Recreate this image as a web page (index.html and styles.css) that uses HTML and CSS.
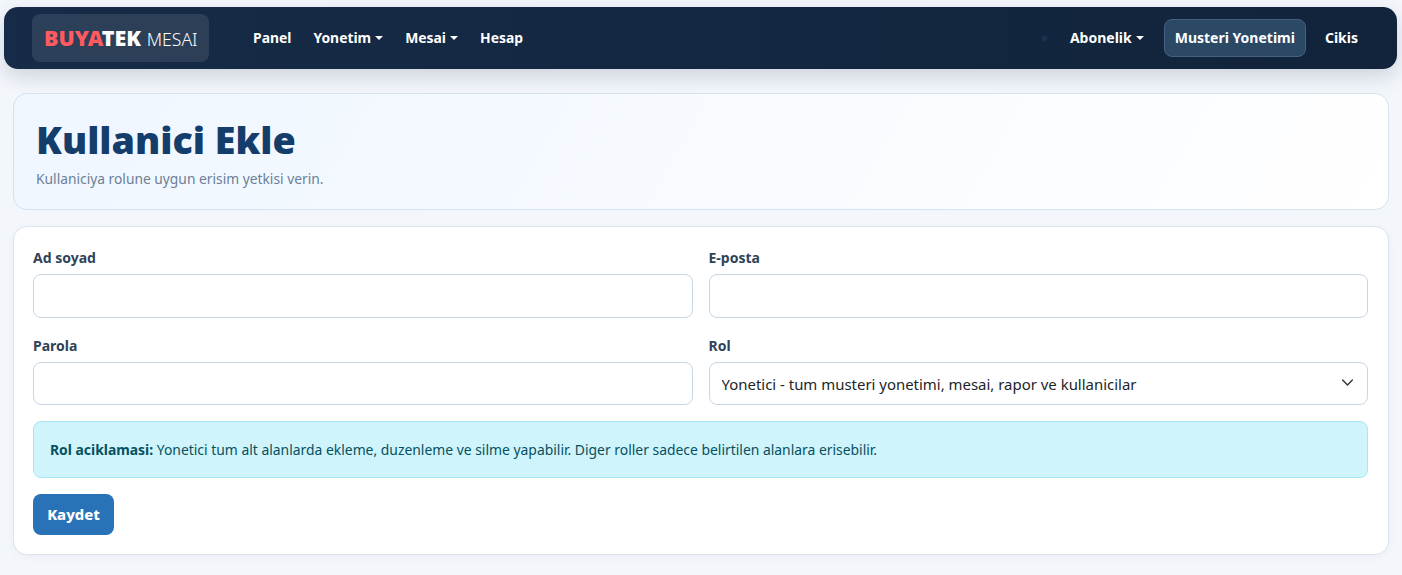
FILE: index.html
```html
<!doctype html>
<html lang="tr">
  <head>
    <meta charset="UTF-8" />
    <meta name="viewport" content="width=device-width, initial-scale=1.0" />
    <title>Kullanici Ekle</title>
    <link rel="stylesheet" href="styles.css">
  </head>

  <body>
    <nav class="navbar">
      <a href="#" class="brand"><span class="brand-red">BUYA</span><span class="brand-white">TEK</span> <span class="brand-light">MESAI</span></a>
      <div class="nav-links">
        <a href="#" class="nav-link">Panel</a>
        <a href="#" class="nav-link caret">Yonetim</a>
        <a href="#" class="nav-link caret">Mesai</a>
        <a href="#" class="nav-link">Hesap</a>
      </div>
      <div class="nav-right">
        <span class="nav-dot"></span>
        <a href="#" class="nav-link caret">Abonelik</a>
        <a href="#" class="nav-link nav-active">Musteri Yonetimi</a>
        <a href="#" class="nav-link">Cikis</a>
      </div>
    </nav>

    <main class="page">
      <div class="hero">
        <h1>Kullanici Ekle</h1>
        <p>Kullaniciya rolune uygun erisim yetkisi verin.</p>
      </div>

      <form class="card">
        <div class="form-grid">
          <div class="field">
            <label for="adSoyad">Ad soyad</label>
            <input type="text" id="adSoyad" class="input input-tall" />
          </div>
          <div class="field">
            <label for="eposta">E-posta</label>
            <input type="email" id="eposta" class="input input-tall" />
          </div>
          <div class="field">
            <label for="parola">Parola</label>
            <input type="password" id="parola" class="input" />
          </div>
          <div class="field">
            <label for="rol">Rol</label>
            <div class="select-wrap">
              <select id="rol" class="input select">
                <option>Yonetici - tum musteri yonetimi, mesai, rapor ve kullanicilar</option>
              </select>
              <svg class="select-arrow" viewBox="0 0 16 16" width="16" height="16" fill="none" stroke="#343a40" stroke-width="1.8" stroke-linecap="round" stroke-linejoin="round"><path d="m2 5 6 6 6-6" /></svg>
            </div>
          </div>
        </div>

        <div class="alert"><strong>Rol aciklamasi:</strong> Yonetici tum alt alanlarda ekleme, duzenleme ve silme yapabilir. Diger roller sadece belirtilen alanlara erisebilir.</div>

        <button type="button" class="btn">Kaydet</button>
      </form>
    </main>
  </body>
</html>
```

FILE: styles.css
```css
* {
  box-sizing: border-box;
}

body {
  margin: 0;
  padding: 7px 0 0;
  min-height: 575px;
  font-family: 'Noto Sans', 'Open Sans', sans-serif;
  font-size: 14px;
  color: #212529;
  background: #f3f6fb;
  overflow: hidden;
}

.navbar {
  display: flex;
  align-items: center;
  height: 62px;
  margin: 0 5px 0 4px;
  padding: 0 28px;
  border-radius: 14px;
  background: linear-gradient(90deg, #162b47 0%, #11243b 100%);
  box-shadow: 0 8px 20px rgba(20, 40, 70, 0.16);
}

.brand {
  display: block;
  width: 177px;
  height: 48px;
  padding: 0 12px;
  margin-right: 33px;
  border-radius: 8px;
  background: rgba(255, 255, 255, 0.1);
  font-size: 21.5px;
  line-height: 48px;
  text-decoration: none;
  white-space: nowrap;
}

.brand-red {
  color: #ff5a5f;
  font-weight: 900;
}

.brand-white {
  color: #fff;
  font-weight: 900;
}

.brand-light {
  color: #fff;
  font-weight: 300;
  font-size: 17.6px;
}

.nav-links,
.nav-right {
  display: flex;
  align-items: center;
}

.nav-right {
  margin-left: auto;
}

.nav-link {
  display: block;
  padding: 8px 11px;
  color: #fff;
  font-size: 14px;
  font-weight: 700;
  line-height: 20px;
  text-decoration: none;
  white-space: nowrap;
}

.nav-links .nav-link {
  font-size: 13.9px;
}

.caret::after {
  content: '';
  display: inline-block;
  margin-left: 4px;
  vertical-align: 3px;
  border-top: 4px solid #fff;
  border-left: 4px solid transparent;
  border-right: 4px solid transparent;
}

.nav-dot {
  width: 5px;
  height: 5px;
  margin-right: 12px;
  border-radius: 50%;
  background: #1a3450;
}

.nav-active {
  margin: 0 9px 0 9px;
  padding: 8px 10px;
  border: 1px solid #46617f;
  border-radius: 8px;
  background: #2b4865;
}

.nav-right .nav-active {
  margin-right: 8px;
}

.page {
  padding: 24px 13px 0;
}

.hero {
  height: 117px;
  padding: 22px 22px 0;
  margin-bottom: 16px;
  border: 1px solid #d5e2f0;
  border-radius: 14px;
  background: linear-gradient(120deg, #eff6ff 0%, #ffffff 100%);
}

.hero h1 {
  margin: 0;
  font-size: 37.7px;
  font-weight: 900;
  line-height: 48px;
  color: #143d6b;
}

.hero p {
  margin: 5px 0 0;
  font-size: 13.8px;
  line-height: 20px;
  color: #6c7f95;
}

.card {
  height: 329px;
  padding: 19px 20px 0 19px;
  border: 1px solid #dbe3ef;
  border-radius: 14px;
  background: #fff;
  box-shadow: 0 2px 8px rgba(20, 40, 70, 0.04);
}

.form-grid {
  display: grid;
  grid-template-columns: 1fr 1fr;
  column-gap: 16px;
  row-gap: 16px;
}

.field label {
  display: block;
  margin-bottom: 6px;
  padding-top: 1px;
  height: 22px;
  font-size: 14px;
  font-weight: 700;
  line-height: 22px;
  color: #2f4358;
}

.input {
  display: block;
  width: 100%;
  height: 43px;
  padding: 0 12px;
  border: 1px solid #c8d6e5;
  border-radius: 8px;
  background: #fff;
  font-family: inherit;
  font-size: 14px;
  color: #212529;
}

.input-tall {
  height: 44px;
}

.select-wrap {
  position: relative;
}

.select {
  appearance: none;
  padding: 1px 36px 0 12px;
  font-size: 14.95px;
}

.select-arrow {
  position: absolute;
  top: 14px;
  right: 14px;
  width: 13px;
  height: 13px;
}

.alert {
  height: 57px;
  margin-top: 16px;
  padding: 0 16px;
  border: 1px solid #a6e6f4;
  border-radius: 8px;
  background: #cff4fc;
  color: #055160;
  font-size: 13.9px;
  line-height: 55px;
  white-space: nowrap;
}

.btn {
  display: block;
  width: 81px;
  height: 41px;
  margin-top: 16px;
  padding: 0 0 2px;
  border: none;
  border-radius: 8px;
  background: #2a72b8;
  color: #fff;
  font-family: inherit;
  font-size: 14.8px;
  font-weight: 800;
  cursor: pointer;
}
```
